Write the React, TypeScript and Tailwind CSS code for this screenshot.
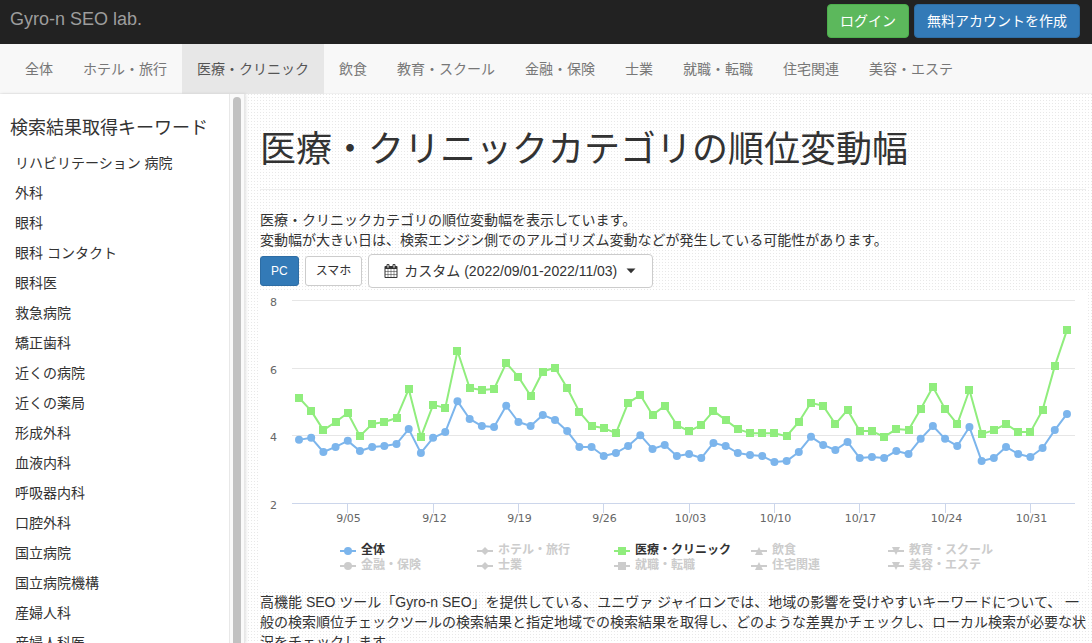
import { useState } from "react";
import { clsx } from "clsx";

const CATEGORIES = [
  "全体",
  "ホテル・旅行",
  "医療・クリニック",
  "飲食",
  "教育・スクール",
  "金融・保険",
  "士業",
  "就職・転職",
  "住宅関連",
  "美容・エステ",
];

const KEYWORDS = [
  "リハビリテーション 病院",
  "外科",
  "眼科",
  "眼科 コンタクト",
  "眼科医",
  "救急病院",
  "矯正歯科",
  "近くの病院",
  "近くの薬局",
  "形成外科",
  "血液内科",
  "呼吸器内科",
  "口腔外科",
  "国立病院",
  "国立病院機構",
  "産婦人科",
  "産婦人科医",
];

// Daily values, 2022/09/01 - 2022/11/03
const ALL = [
  3.89, 3.95, 3.53, 3.68, 3.86, 3.56, 3.68, 3.71, 3.77, 4.21, 3.5, 3.95, 4.12, 5.04, 4.51, 4.3,
  4.27, 4.9, 4.42, 4.3, 4.63, 4.48, 4.15, 3.68, 3.68, 3.41, 3.5, 3.71, 4.03, 3.62, 3.74, 3.41,
  3.47, 3.35, 3.8, 3.71, 3.5, 3.44, 3.41, 3.23, 3.26, 3.53, 3.98, 3.74, 3.59, 3.83, 3.35, 3.38,
  3.35, 3.56, 3.47, 3.92, 4.3, 3.92, 3.71, 4.27, 3.26, 3.35, 3.68, 3.47, 3.38, 3.65, 4.18, 4.66,
];
const CLINIC = [
  5.14, 4.75, 4.18, 4.42, 4.69, 4.0, 4.36, 4.42, 4.54, 5.4, 3.98, 4.93, 4.84, 6.53, 5.43, 5.37,
  5.4, 6.17, 5.76, 5.2, 5.92, 6.03, 5.43, 4.72, 4.3, 4.24, 4.09, 4.99, 5.22, 4.63, 4.9, 4.33,
  4.15, 4.33, 4.75, 4.48, 4.21, 4.09, 4.09, 4.09, 4.0, 4.42, 4.99, 4.9, 4.36, 4.78, 4.15, 4.15,
  3.98, 4.21, 4.18, 4.81, 5.46, 4.81, 4.36, 5.37, 4.06, 4.18, 4.36, 4.12, 4.12, 4.78, 6.08, 7.15,
];

const TICKS = ["9/05", "9/12", "9/19", "9/26", "10/03", "10/10", "10/17", "10/24", "10/31"];

const LEGEND: { name: string; shape: Shape; color: string; on?: boolean }[] = [
  { name: "全体", shape: "circle", color: "#7cb5ec", on: true },
  { name: "ホテル・旅行", shape: "diamond", color: "#cccccc" },
  { name: "医療・クリニック", shape: "square", color: "#90ed7d", on: true },
  { name: "飲食", shape: "up", color: "#cccccc" },
  { name: "教育・スクール", shape: "down", color: "#cccccc" },
  { name: "金融・保険", shape: "circle", color: "#cccccc" },
  { name: "士業", shape: "diamond", color: "#cccccc" },
  { name: "就職・転職", shape: "square", color: "#cccccc" },
  { name: "住宅関連", shape: "up", color: "#cccccc" },
  { name: "美容・エステ", shape: "down", color: "#cccccc" },
];

type Shape = "circle" | "diamond" | "square" | "up" | "down";

const px = (i: number) => 39 + i * 12.19;
const py = (v: number) => 211.5 - (v - 2) * 33.67;
const points = (data: number[]) => data.map((v, i) => `${px(i)},${py(v)}`).join(" ");

export default function App() {
  const [category, setCategory] = useState("医療・クリニック");
  const [device, setDevice] = useState<"pc" | "sp">("pc");

  return (
    <div className="flex h-screen flex-col overflow-hidden bg-white font-['Liberation_Sans','Noto_Sans_CJK_JP',sans-serif] text-sm leading-5 text-[#333]">
      <header className="flex h-11 shrink-0 items-center justify-between bg-[#222] pl-[10px] pr-3">
        <a href="#" className="pb-1.5 text-lg leading-5 text-[#9d9d9d]">Gyro-n SEO lab.</a>
        <div className="flex gap-[5px] pb-0.5">
          <button className="rounded border border-[#4cae4c] bg-[#5cb85c] px-3 py-1.5 text-white">ログイン</button>
          <button className="rounded border border-[#2e6da4] bg-[#337ab7] px-3 py-1.5 text-white">
            無料アカウントを作成
          </button>
        </div>
      </header>

      <nav className="flex h-[50px] shrink-0 border-b border-[#f0f0f0] bg-[#f8f8f8] pl-[10px]">
        {CATEGORIES.map((c) => (
          <a
            key={c}
            href="#"
            onClick={() => setCategory(c)}
            className={clsx(
              "h-[50px] whitespace-nowrap px-[15px] py-[15px]",
              c === category ? "bg-[#e7e7e7] text-[#555]" : "text-[#777]"
            )}
          >
            {c}
          </a>
        ))}
      </nav>

      <div className="flex min-h-0 flex-1">
        <aside className="flex w-[245px] shrink-0 overflow-hidden border-r border-[#e7e7e7] bg-white shadow-[1px_0_3px_rgba(0,0,0,0.12)]">
          <div className="flex-1 pl-[10px] pt-6">
            <h4 className="mb-[10px] text-lg leading-5">検索結果取得キーワード</h4>
            <ul>
              {KEYWORDS.map((k) => (
                <li key={k}>
                  <a href="#" className="block px-[5px] py-[5px]">{k}</a>
                </li>
              ))}
            </ul>
          </div>
          {/* Scrollbar */}
          <div className="flex w-[15px] justify-center border-l border-[#e8e8e8] bg-[#fafafa] pt-[3px]">
            <div className="w-2 rounded-t-full bg-[#c1c1c1]" />
          </div>
        </aside>

        {/* Dotted background: one 1px dot per 3px tile */}
        <main className="min-w-0 flex-1 bg-[conic-gradient(at_1px_1px,transparent_75%,#e8e8e8_0)] bg-[length:3px_3px] pl-[15px] pr-[6px] pt-9">
          <h1 className="mb-5 border-b border-[#eee] pb-[19px] text-4xl leading-10">
            医療・クリニックカテゴリの順位変動幅
          </h1>
          <p>
            医療・クリニックカテゴリの順位変動幅を表示しています。
            <br />
            変動幅が大きい日は、検索エンジン側でのアルゴリズム変動などが発生している可能性があります。
          </p>

          <div className="mb-1 mt-1 flex items-center gap-1.5">
            <DeviceButton label="PC" active={device === "pc"} onClick={() => setDevice("pc")} />
            <DeviceButton label="スマホ" active={device === "sp"} onClick={() => setDevice("sp")} />
            <button
              aria-haspopup="menu"
              className="flex h-[34px] items-center gap-1.5 rounded border border-[#ccc] bg-white px-[15px]"
            >
              <CalendarIcon />
              カスタム (2022/09/01-2022/11/03)
              <svg width="12" height="6" viewBox="0 0 12 6" className="ml-0.5">
                <path d="M1.5 0.5h9L6 5.2z" fill="#333" />
              </svg>
            </button>
          </div>

          <div className="h-[300px] bg-white">
            <Chart />
            <ul className="grid grid-cols-[repeat(5,137px)] pl-20 pt-0.5">
              {LEGEND.map((l) => (
                <li key={l.name} className="flex h-[15px]">
                  <button
                    className={clsx(
                      "flex items-center gap-[5px] whitespace-nowrap text-xs font-bold leading-[15px]",
                      l.on ? "text-[#333]" : "text-[#ccc]"
                    )}
                  >
                    <Marker shape={l.shape} color={l.color} />
                    {l.name}
                  </button>
                </li>
              ))}
            </ul>
          </div>

          <p>
            高機能 SEO ツール「Gyro-n SEO」を提供している、ユニヴァ ジャイロンでは、地域の影響を受けやすいキーワードについて、
            一般の検索順位チェックツールの検索結果と指定地域での検索結果を取得し、どのような差異かチェックし、ローカル検索が必要な状況をチェックします。
          </p>
        </main>
      </div>
    </div>
  );
}

function DeviceButton({ label, active, onClick }: { label: string; active: boolean; onClick: () => void }) {
  return (
    <button
      onClick={onClick}
      className={clsx(
        "h-[30px] rounded-[3px] border px-[10px] text-xs",
        active ? "border-[#2e6da4] bg-[#337ab7] text-white" : "border-[#ccc] bg-white text-[#333]"
      )}
    >
      {label}
    </button>
  );
}

function Chart() {
  return (
    <svg viewBox="0 0 826 249" className="block w-full font-['DejaVu_Sans',sans-serif] text-[11px]">
      {[8, 6, 4, 2].map((v) => {
        const y = Math.round(py(v)) - 0.5;
        return (
          <g key={v}>
            <path d={`M32 ${y}H815`} stroke={v === 2 ? "#ccd6eb" : "#e6e6e6"} />
            <text x="17" y={y + 5} textAnchor="end" fill="#666">{v}</text>
          </g>
        );
      })}
      {TICKS.map((t, i) => {
        const x = Math.floor(px(4 + i * 7)) + 0.5;
        return (
          <g key={t}>
            <path d={`M${x} 212v9`} stroke="#ccd6eb" />
            <text x={x + 1} y="230" textAnchor="middle" fill="#666">{t}</text>
          </g>
        );
      })}
      <polyline points={points(ALL)} fill="none" stroke="#7cb5ec" strokeWidth="2" strokeLinejoin="round" />
      {ALL.map((v, i) => (
        <circle key={i} cx={px(i)} cy={py(v)} r="4" fill="#7cb5ec" />
      ))}
      <polyline points={points(CLINIC)} fill="none" stroke="#90ed7d" strokeWidth="2" strokeLinejoin="round" />
      {CLINIC.map((v, i) => (
        <rect key={i} x={Math.round(px(i) - 4)} y={Math.round(py(v) - 4)} width="8" height="8" fill="#90ed7d" />
      ))}
    </svg>
  );
}

function Marker({ shape, color }: { shape: Shape; color: string }) {
  return (
    <svg width="16" height="10" viewBox="0 0 16 10" fill={color}>
      <path d="M0 4h16v2H0z" />
      {shape === "circle" && <circle cx="8" cy="5" r="4" />}
      {shape === "diamond" && <path d="M8 1l4 4-4 4-4-4z" />}
      {shape === "square" && <path d="M4 1h8v8H4z" />}
      {shape === "up" && <path d="M8 1l4 8H4z" />}
      {shape === "down" && <path d="M4 1h8L8 9z" />}
    </svg>
  );
}

function CalendarIcon() {
  return (
    <svg width="14" height="14" viewBox="0 0 1792 1792" fill="#333">
      <path d="M192 1664h288v-288h-288v288zm352 0h320v-288h-320v288zm-352-352h288v-320h-288v320zm352 0h320v-320h-320v320zm-352-384h288v-288h-288v288zm736 736h320v-288h-320v288zm-384-736h320v-288h-320v288zm768 736h288v-288h-288v288zm-384-352h320v-320h-320v320zm-352-864v-288q0-13-9.5-22.5t-22.5-9.5h-64q-13 0-22.5 9.5t-9.5 22.5v288q0 13 9.5 22.5t22.5 9.5h64q13 0 22.5-9.5t9.5-22.5zm736 864h288v-320h-288v320zm-384-384h320v-288h-320v288zm384 0h288v-288h-288v288zm32-480v-288q0-13-9.5-22.5t-22.5-9.5h-64q-13 0-22.5 9.5t-9.5 22.5v288q0 13 9.5 22.5t22.5 9.5h64q13 0 22.5-9.5t9.5-22.5zm384-64v1280q0 52-38 90t-90 38h-1408q-52 0-90-38t-38-90v-1280q0-52 38-90t90-38h128v-96q0-66 47-113t113-47h64q66 0 113 47t47 113v96h384v-96q0-66 47-113t113-47h64q66 0 113 47t47 113v96h128q52 0 90 38t38 90z" />
    </svg>
  );
}
